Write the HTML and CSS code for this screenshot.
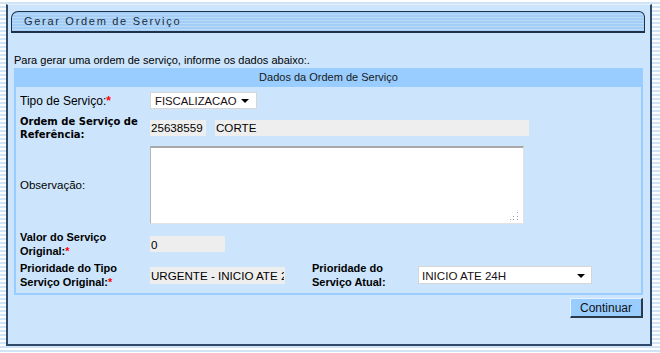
FILE: index.html
```html
<!DOCTYPE html>
<html lang="pt-BR">
<head>
    <meta charset="UTF-8">
    <title>Gerar Ordem de Serviço</title>
    <link rel="stylesheet" href="styles.css">
</head>
<body>

<div class="page">
    <div class="panel">
        <div class="tab">Gerar Ordem de Serviço</div>

        <p class="intro">Para gerar uma ordem de serviço, informe os dados abaixo:.</p>

        <!-- Dados da ordem -->
        <div class="form-box">
            <div class="form-head">Dados da Ordem de Serviço</div>
            <div class="form-body">
                <label class="lbl lbl-tipo">Tipo de Serviço:<span class="req">*</span></label>
                <div class="select select-tipo wide"><span>FISCALIZACAO</span><i class="arrow"></i></div>

                <label class="lbl lbl-strong">Ordem de Serviço de Referência:</label>
                <div class="inline wide">
                    <input class="ro ro-num" type="text" value="25638559" readonly>
                    <input class="ro ro-desc" type="text" value="CORTE" readonly>
                </div>

                <label class="lbl">Observação:</label>
                <div class="area-wrap wide">
                    <textarea class="area"></textarea>
                    <svg class="grip" width="9" height="9" viewBox="0 0 9 9">
                        <rect x="7" y="1" width="1" height="1" fill="#9a9a9a"/>
                        <rect x="3" y="5" width="1" height="1" fill="#9a9a9a"/>
                        <rect x="7" y="5" width="1" height="1" fill="#9a9a9a"/>
                        <rect x="0" y="8" width="1" height="1" fill="#9a9a9a"/>
                        <rect x="3" y="8" width="1" height="1" fill="#9a9a9a"/>
                        <rect x="7" y="8" width="1" height="1" fill="#9a9a9a"/>
                    </svg>
                </div>

                <label class="lbl lbl-bold">Valor do Serviço<br>Original:<span class="req">*</span></label>
                <div class="wide"><input class="ro ro-valor" type="text" value="0" readonly></div>

                <label class="lbl lbl-bold">Prioridade do Tipo<br>Serviço Original:<span class="req">*</span></label>
                <div><input class="ro ro-prio" type="text" value="URGENTE - INICIO ATE 24H" readonly></div>
                <label class="lbl lbl-bold lbl-flush">Prioridade do<br>Serviço Atual:</label>
                <div class="select select-prio"><span>INICIO ATE 24H</span><i class="arrow"></i></div>
            </div>
        </div>

        <div class="actions">
            <button class="btn">Continuar</button>
        </div>
    </div>
</div>

</body>
</html>
```

FILE: styles.css
```css
body {
    margin: 0;
    font-family: "Liberation Sans", Arial, sans-serif;
    font-size: 11px;
    color: #000;
    background: repeating-linear-gradient(to bottom, #ffffff 0, #ffffff 2px, #cfe5f7 2px, #cfe5f7 4px);
    height: 353px;
}
.page {
    padding: 4px 0 0 6px;
}
.panel {
    width: 646px;
    height: 342px;
    box-sizing: border-box;
    background: #cce5fc;
    border: 2px solid #2e4a68;
    border-top: 1px solid #e4f1fc;
    padding-top: 6px;
}
.tab {
    height: 22px;
    box-sizing: border-box;
    margin: 0 5px 0 3px;
    padding-left: 12px;
    border: 1px solid #1e3148;
    border-bottom-width: 2px;
    border-radius: 7px 6px 0 0;
    background: repeating-linear-gradient(to bottom, #a3cdf4 0, #a3cdf4 2px, #b9dbf9 2px, #b9dbf9 3px);
    font-size: 11px;
    line-height: 19px;
    letter-spacing: 1.7px;
    color: #1b2b3d;
}
.intro {
    margin: 20px 0 1px 6px;
    line-height: 14px;
}
.form-box {
    margin: 0 7px 0 6px;
    background: #99ccff;
    padding: 0 2px 2px;
}
.form-head {
    height: 19px;
    line-height: 19px;
    text-align: center;
    color: #1a1a1a;
}
.form-body {
    background: #cce5fc;
    display: grid;
    grid-template-columns: 134px 162px 106px 1fr;
    grid-template-rows: 27px 27px 88px 30px 32px;
    align-items: center;
    padding-bottom: 2px;
}
.lbl {
    padding-left: 4px;
    font-size: 11.5px;
    line-height: 14px;
}
.lbl-tipo {
    font-size: 12px;
}
.lbl-bold {
    font-size: 11px;
    font-weight: bold;
}
.lbl-flush {
    padding-left: 0;
}
.lbl-strong {
    font-family: "DejaVu Sans", Verdana, sans-serif;
    font-weight: bold;
    font-size: 10px;
    line-height: 13px;
    padding-right: 4px;
}
.req {
    color: #ff0000;
    font-weight: bold;
}
.wide {
    grid-column: 2 / -1;
}
.inline {
    display: flex;
    gap: 9px;
}
.ro {
    box-sizing: border-box;
    height: 16px;
    border: none;
    background: #eeeeee;
    padding: 0 1px;
    margin: 0;
    font-family: "Liberation Sans", Arial, sans-serif;
    font-size: 11.6px;
    color: #000;
    outline: none;
}
.ro-num { width: 56px; }
.ro-desc { width: 314px; }
.ro-valor { width: 75px; }
.ro-prio { width: 135px; height: 17px; }

.select {
    box-sizing: border-box;
    display: flex;
    align-items: center;
    justify-content: space-between;
    background: #fff;
    border: 1px solid #d6d6d6;
    font-size: 11.3px;
    color: #1a0f14;
}
.select-tipo {
    width: 107px;
    height: 17px;
    padding: 0 7px 0 4px;
    justify-self: start;
}
.select-prio {
    width: 174px;
    height: 18px;
    padding: 0 6px 0 3px;
    font-size: 11.6px;
}
.arrow {
    width: 0;
    height: 0;
    border-left: 4px solid transparent;
    border-right: 4px solid transparent;
    border-top: 4px solid #000;
    margin-top: 1px;
}
.area-wrap {
    position: relative;
    width: 374px;
    height: 78px;
}
.area {
    box-sizing: border-box;
    display: block;
    width: 374px;
    height: 78px;
    margin: 0;
    resize: none;
    background: #fff;
    border: 1px solid #e2e2e2;
    border-top: 2px solid #a9a9a9;
    border-left: 1px solid #b5b5b5;
}
.grip {
    position: absolute;
    right: 5px;
    bottom: 4px;
}
.actions {
    display: flex;
    justify-content: flex-end;
    padding-right: 7px;
    margin-top: 3px;
}
.btn {
    width: 73px;
    height: 20px;
    box-sizing: border-box;
    padding: 0;
    background: #99ccff;
    border-style: solid;
    border-width: 1px 2px 2px 1px;
    border-color: #e6f2ff #2b3a4c #2b3a4c #e6f2ff;
    font-family: "Liberation Sans", Arial, sans-serif;
    font-size: 12px;
    color: #111;
}
```
